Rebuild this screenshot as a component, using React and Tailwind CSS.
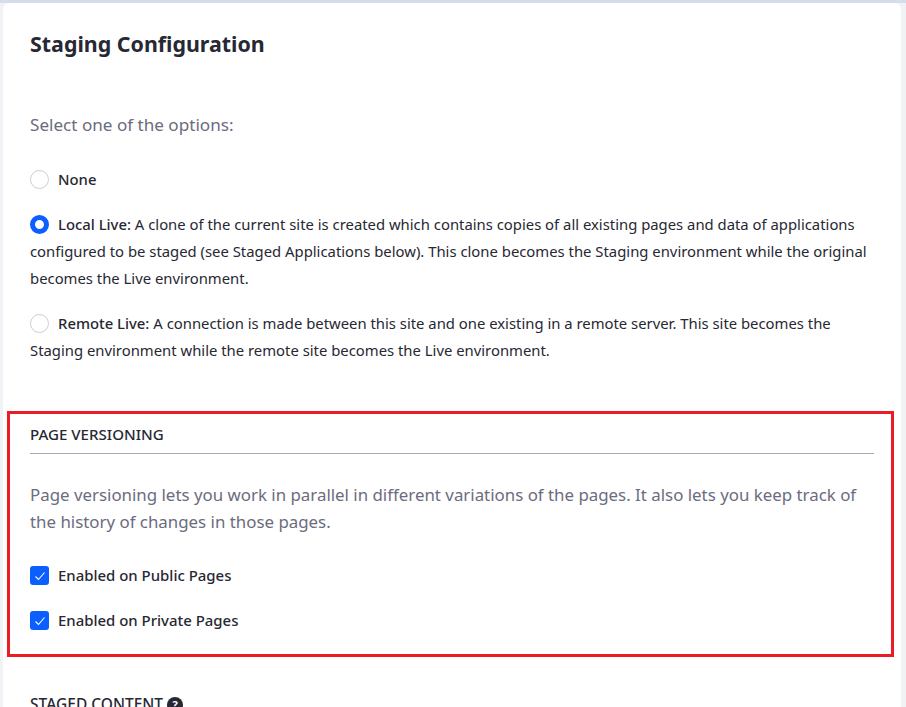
export default function App() {
  return (
    <div className="h-[707px] w-[906px] overflow-hidden bg-[#f1f2f6] font-['Noto_Sans',sans-serif] text-[#272833]">
      <div className="h-[3px] bg-[#d5dcee]" />
      <div className="ml-[3px] mr-[5px] h-[704px] overflow-hidden rounded-t-[6px] bg-white">
        <div className="px-[27px] pt-[26px]">
          <h1 className="text-[21.4px] font-bold leading-[30px] text-[#272833]">Staging Configuration</h1>
          <p className="mt-[51px] text-[17.1px] leading-[30px] text-[#6b6c7e]">Select one of the options:</p>
          <div className="mt-[26px] flex h-[27px] items-center text-[14.85px] leading-[27px]">
            <span className="mr-[9px] h-[19px] w-[19px] rounded-full border border-[#cdced9] bg-white" />
            <b className="font-medium">None</b>
          </div>
          <p className="mt-[18px] text-[14.85px] leading-[27px]">
            <span className="mr-[9px] inline-block h-[19px] w-[19px] translate-y-[4px] rounded-full border-[5px] border-[#0b5fff] bg-white" />
            <b className="font-medium">Local Live:</b> A clone of the current site is created which contains copies of all existing pages and data of applications configured to be staged (see Staged Applications below). This clone becomes the Staging environment while the original becomes the Live environment.
          </p>
          <p className="mt-[18px] text-[14.85px] leading-[27px]">
            <span className="mr-[9px] inline-block h-[19px] w-[19px] translate-y-[4px] rounded-full border border-[#cdced9] bg-white" />
            <b className="font-medium">Remote Live:</b> A connection is made between this site and one existing in a remote server. This site becomes the Staging environment while the remote site becomes the Live environment.
          </p>
        </div>
        <section className="ml-[4px] mr-[7px] mt-[47px] h-[246px] border-[3px] border-[#ed1c24] pl-[20px] pr-[17px] pt-[7px]">
          <h2 className="border-b border-[#a7a9bc] pb-[5px] text-[15.1px] font-medium leading-[27px]">PAGE VERSIONING</h2>
          <p className="mt-[27px] text-[16.88px] leading-[27px] text-[#6b6c7e]">Page versioning lets you work in parallel in different variations of the pages. It also lets you keep track of the history of changes in those pages.</p>
          <div className="mt-[27px] flex h-[27px] items-center text-[14.95px] font-medium">
            <Check /> Enabled on Public Pages
          </div>
          <div className="mt-[18px] flex h-[27px] items-center text-[14.95px] font-medium">
            <Check /> Enabled on Private Pages
          </div>
        </section>
        <div className="mt-[34px] flex items-center pl-[27px] text-[15.5px] font-medium leading-[27px]">
          STAGED CONTENT
          <span className="ml-[4px] flex h-[16px] w-[16px] items-center justify-center rounded-full bg-[#272833] text-[11px] font-bold leading-none text-white">?</span>
        </div>
      </div>
    </div>
  );
}

function Check() {
  return (
    <span className="mr-[9px] flex h-[19px] w-[19px] items-center justify-center rounded-[3px] bg-[#0b5fff]">
      <svg width="12" height="12" viewBox="0 0 12 12" fill="none">
        <path d="M1.5 6.5 L4.5 9.5 L10.5 2.5" stroke="white" strokeWidth="1.1" />
      </svg>
    </span>
  );
}
